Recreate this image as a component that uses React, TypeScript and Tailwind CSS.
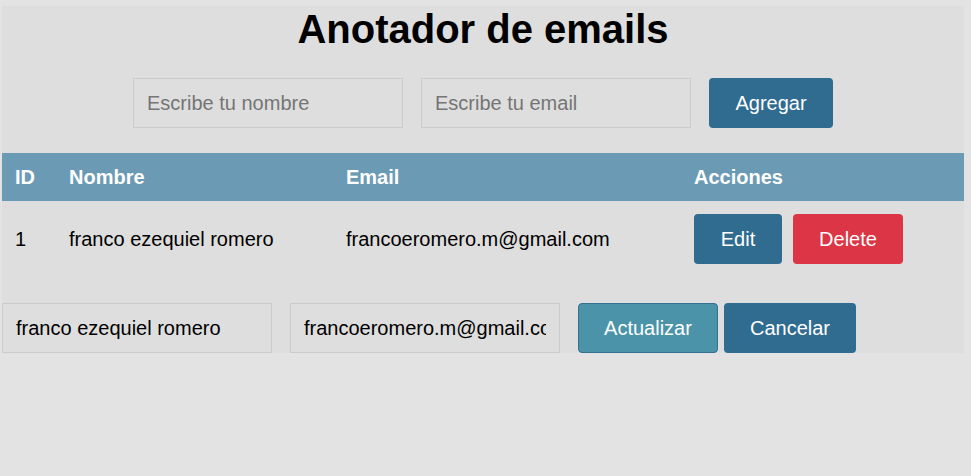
export default function App() {
  const font = { fontFamily: '"Liberation Sans", Arial, sans-serif' };
  const input =
    "h-[50px] w-[270px] border border-[#cccccc] bg-[#dedede] px-[13px] text-[20px] text-black placeholder:text-[#757575] outline-none";
  const btn = "h-[50px] rounded-[4px] text-[20px] text-white";

  return (
    <div className="min-h-[476px] bg-[#e3e3e3] pt-[6px]" style={font}>
      <div className="mx-[2px] w-[962px] bg-[#dedede] pb-0">
        <h1 className="text-center text-[40px] font-bold leading-[46px] text-black">
          Anotador de emails
        </h1>

        <div className="mt-[26px] flex justify-center gap-[18px]">
          <input className={input} placeholder="Escribe tu nombre" />
          <input className={input} placeholder="Escribe tu email" />
          <button className={`${btn} w-[124px] bg-[#306b90]`}>Agregar</button>
        </div>

        <div className="mt-[25px] text-[20px]">
          <div className="grid h-[48px] grid-cols-[54px_277px_348px_283px] items-center bg-[#6b9ab5] font-bold text-white">
            <div className="pl-[13px]">ID</div>
            <div className="pl-[13px]">Nombre</div>
            <div className="pl-[13px]">Email</div>
            <div className="pl-[13px]">Acciones</div>
          </div>
          <div className="grid h-[76px] grid-cols-[54px_277px_348px_283px] items-center text-black">
            <div className="pl-[13px]">1</div>
            <div className="pl-[13px]">franco ezequiel romero</div>
            <div className="pl-[13px]">francoeromero.m@gmail.com</div>
            <div className="flex gap-[11px] pl-[13px]">
              <button className={`${btn} w-[88px] bg-[#306b90]`}>Edit</button>
              <button className={`${btn} w-[110px] bg-[#dc3545]`}>Delete</button>
            </div>
          </div>
        </div>

        <div className="mt-[26px] flex gap-[18px]">
          <input className={input} defaultValue="franco ezequiel romero" />
          <input className={input} defaultValue="francoeromero.m@gmail.com" />
          <div className="flex gap-[6px]">
            <button className={`${btn} w-[140px] border border-[#34708f] bg-[#4b93a9]`}>
              Actualizar
            </button>
            <button className={`${btn} w-[132px] bg-[#306b90]`}>Cancelar</button>
          </div>
        </div>
      </div>
    </div>
  );
}
